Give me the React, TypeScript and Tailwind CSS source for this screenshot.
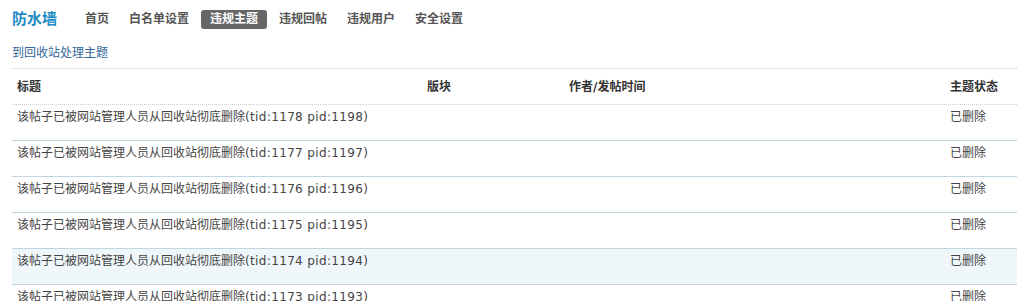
import React from 'react'

const navItems = ['首页', '白名单设置', '违规主题', '违规回帖', '违规用户', '安全设置']

const rows = [
  { tid: 1178, pid: 1198 },
  { tid: 1177, pid: 1197 },
  { tid: 1176, pid: 1196 },
  { tid: 1175, pid: 1195 },
  { tid: 1174, pid: 1194 },
  { tid: 1173, pid: 1193 },
]

const font = { fontFamily: '"DejaVu Sans", "Noto Sans CJK SC", sans-serif' }

export default function App() {
  return (
    <div className="w-[1017px] h-[301px] overflow-hidden bg-white pl-[12px] pt-[10px]" style={font}>
      {/* Top nav */}
      <div className="flex items-center h-[19px]">
        <div className="text-[15px] font-bold text-[#1e8bc3] leading-[19px] w-[65px]">防水墙</div>
        <div className="flex items-center gap-[4px]">
          {navItems.map((item) => (
            <a
              key={item}
              className={`px-2 h-[19px] leading-[19px] text-[12px] font-bold rounded-[3px] cursor-pointer ${
                item === '违规主题' ? 'bg-[#666] text-white px-[9px]' : 'text-[#555]'
              }`}
            >
              {item}
            </a>
          ))}
        </div>
      </div>

      {/* Recycle link */}
      <div className="mt-[17px] mb-[8px] h-[14px] leading-[14px] text-[12px]">
        <a className="text-[#336699] cursor-pointer">到回收站处理主题</a>
      </div>

      {/* Table */}
      <div className="text-[12px]">
        <div className="grid grid-cols-[410px_142px_381px_1fr] h-[37px] items-center border-y border-dotted border-[#cdcdcd] font-bold text-[#333]">
          <div className="pl-[5px]">标题</div>
          <div className="pl-[5px]">版块</div>
          <div className="pl-[5px]">作者/发帖时间</div>
          <div className="pl-[5px]">主题状态</div>
        </div>
        {rows.map((r, i) => (
          <div
            key={r.tid}
            className={`grid grid-cols-[410px_142px_381px_1fr] h-[36px] pt-[3px] leading-[18px] text-[#444] ${
              i === rows.length - 1 ? '' : 'border-b border-[#c2d5e3]'
            } ${i === 4 ? 'bg-[#f0f7fb]' : ''}`}
          >
            <div className="pl-[5px] whitespace-nowrap">
              该帖子已被网站管理人员从回收站彻底删除
              <span className="tracking-[0.35px]">(tid:{r.tid} pid:{r.pid})</span>
            </div>
            <div />
            <div />
            <div className="pl-[5px]">已删除</div>
          </div>
        ))}
      </div>
    </div>
  )
}
